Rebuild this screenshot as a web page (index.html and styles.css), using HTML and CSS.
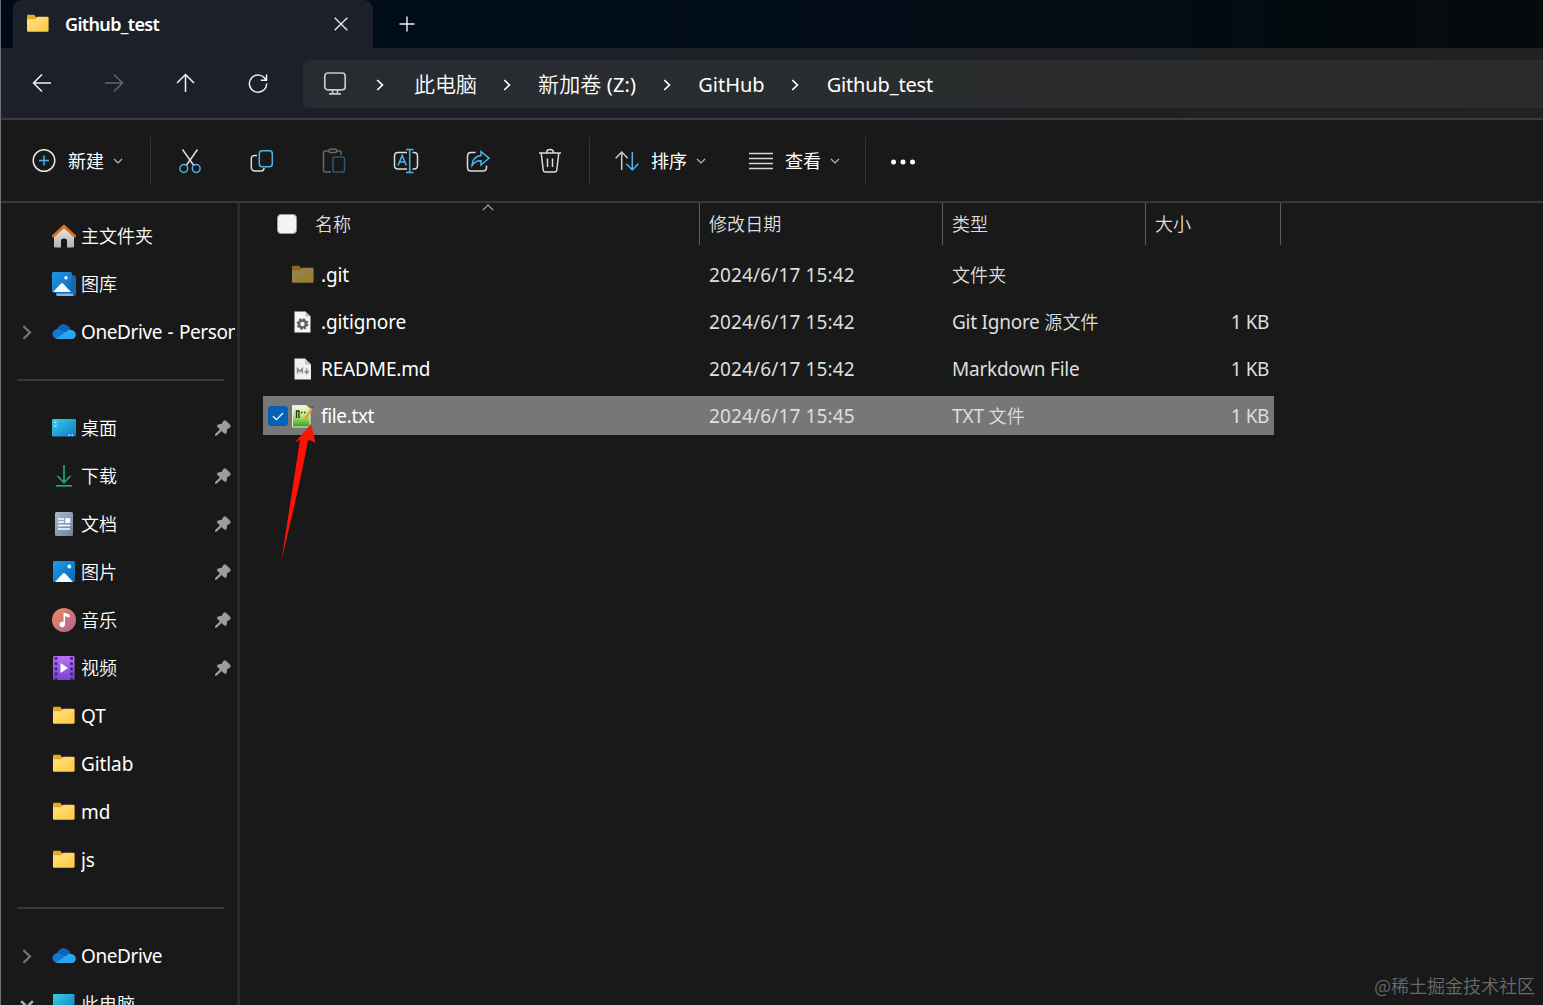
FILE: index.html
```html
<!DOCTYPE html>
<html lang="zh-CN">
<head>
  <meta charset="UTF-8" />
  <title>Github_test</title>
  <link rel="stylesheet" href="styles.css">
</head>
<body>

  <!-- shared icons -->
  <svg class="defs" width="0" height="0">
    <defs>
      <linearGradient id="gFolder" x1="0" y1="0" x2="1" y2="1"><stop offset="0" stop-color="#ffe08a"/><stop offset="1" stop-color="#ffc83d"/></linearGradient>
      <linearGradient id="gBlue" x1="0" y1="0" x2="1" y2="1"><stop offset="0" stop-color="#1f9be6"/><stop offset="1" stop-color="#0a66b8"/></linearGradient>
      <linearGradient id="gDesk" x1="0" y1="0" x2="1" y2="1"><stop offset="0" stop-color="#35d0e2"/><stop offset="1" stop-color="#0f78c8"/></linearGradient>
      <linearGradient id="gHouse" x1="0" y1="0" x2="0" y2="1"><stop offset="0" stop-color="#e8e8e8"/><stop offset="1" stop-color="#b4b4b4"/></linearGradient>
      <linearGradient id="gDoc" x1="0" y1="0" x2="1" y2="1"><stop offset="0" stop-color="#a9b8ca"/><stop offset="1" stop-color="#6f84a2"/></linearGradient>
      <linearGradient id="gMusic" x1="0" y1="0" x2="1" y2="1"><stop offset="0" stop-color="#f08a55"/><stop offset="1" stop-color="#b0609c"/></linearGradient>
      <linearGradient id="gVideo" x1="0" y1="0" x2="0" y2="1"><stop offset="0" stop-color="#b673f2"/><stop offset="1" stop-color="#8040d8"/></linearGradient>
      <linearGradient id="gNote" x1="0" y1="0" x2="0" y2="1"><stop offset="0" stop-color="#f2f7e8"/><stop offset=".45" stop-color="#c8e87c"/><stop offset="1" stop-color="#2e9e1c"/></linearGradient>
    </defs>
    <symbol id="folder" viewBox="0 0 24 24">
      <path d="M1 4Q1 2.800 2.200 2.800H8L10 4.800V9H1z" fill="#e8a91c"/>
      <path d="M1 7.200H9L11 4.800H21.600Q22.600 4.800 22.600 6V18.600Q22.600 19.800 21.600 19.800H2.200Q1 19.800 1 18.600z" fill="url(#gFolder)"/>
    </symbol>
    <symbol id="cloud" viewBox="0 0 24 24">
      <path d="M4.500 11C6 2.500 15.500 2 18.500 9.500L12 14z" fill="#0a64b8"/>
      <path d="M5.500 19C-1.500 18.500-1 9 6 9Q9 9 18 14.500L10 19z" fill="#1179d0"/>
      <path d="M3.800 18.600L15 11Q17 9 19.500 10C25.500 11 25 19 19.500 19H6Q4.500 19 3.800 18.600z" fill="#2ba4ee"/>
    </symbol>
    <symbol id="pin" viewBox="0 0 16 16">
      <path d="M8.800 1.400Q9.800.4 10.800 1.400L14.600 5.200Q15.600 6.200 14.500 7L11.800 8.800 11 12.600Q10.300 13.800 9.400 12.900L6.500 10.100 1.600 15 .600 15.200.8 14.200 5.700 9.300 2.900 6.500Q2.200 5.500 3.400 5L7.200 4.300z" fill="#9b9fa1" stroke="#9b9fa1" stroke-width="1.200"/>
    </symbol>
    <symbol id="down" viewBox="0 0 10 6"><path d="M1 1L5 5L9 1" fill="none" stroke="#b8b8b8" stroke-width="1.200"/></symbol>
    <symbol id="right" viewBox="0 0 8 12"><path d="M1.200 1L6.400 6L1.200 11" fill="none" stroke="currentColor" stroke-width="1.700"/></symbol>
    <symbol id="picture" viewBox="0 0 22 22">
      <rect x="0" y="0" width="22" height="21" rx="1.500" fill="url(#gBlue)"/>
      <path d="M2 21L9.800 12.600Q11 11.400 12.200 12.600L20 21z" fill="#f4f8fc"/>
      <circle cx="16.300" cy="5.500" r="1.900" fill="#fff"/>
    </symbol>
  </svg>

  <div class="window">
    <header class="titlebar">
      <div class="tab">
        <svg class="icon" viewBox="0 0 24 24"><use href="#folder"/></svg>
        <span class="tab-title">Github_test</span>
        <svg class="tab-close" viewBox="0 0 14 14"><path d="M.7.7L13.300 13.300M13.300.7L.7 13.300" fill="none" stroke="#eee" stroke-width="1.300"/></svg>
      </div>
      <svg class="tab-new" viewBox="0 0 16 16"><path d="M8 .5V15.500M.5 8H15.500" stroke="#eee" stroke-width="1.400"/></svg>
    </header>

    <nav class="navbar">
      <div class="nav-btn"><svg viewBox="0 0 24 24"><path d="M21 12H3.500M12 3.500L3.500 12L12 20.500"/></svg></div>
      <div class="nav-btn disabled"><svg viewBox="0 0 24 24"><path d="M3 12H20.500M12 3.500L20.500 12L12 20.500"/></svg></div>
      <div class="nav-btn"><svg viewBox="0 0 24 24"><path d="M11.500 21V3.500M3 12L11.500 3.500L20 12"/></svg></div>
      <div class="nav-btn"><svg viewBox="0 0 24 24"><path d="M19.800 9A8.600 8.600 0 1 0 20.600 12.500M20.500 3.500V9.200H14.800"/></svg></div>
      <div class="address">
        <svg class="monitor" viewBox="0 0 24 24"><rect x="1.800" y="1" width="20.400" height="16.800" rx="3"/><path d="M9.500 18V21M14.500 18V21M6 21.800H18"/></svg>
        <svg class="sep"><use href="#right"/></svg>
        <span class="zh crumb-pc">此电脑</span>
        <svg class="sep"><use href="#right"/></svg>
        <span class="crumb-vol"><span class="zh">新加卷</span> (Z:)</span>
        <svg class="sep"><use href="#right"/></svg>
        <span class="crumb-hub">GitHub</span>
        <svg class="sep"><use href="#right"/></svg>
        <span class="crumb-test">Github_test</span>
      </div>
    </nav>

    <div class="toolbar">
      <div class="menu">
        <svg class="icon" viewBox="0 0 24 24"><circle cx="12" cy="11.500" r="10.800" fill="none" stroke="#e2e2e2" stroke-width="1.500"/><path d="M12 6.500V16.500M7 11.500H17" stroke="#4cb4f0" stroke-width="1.500"/></svg>
        <span class="zh">新建</span>
        <svg class="caret"><use href="#down"/></svg>
      </div>
      <i class="split"></i>
      <div class="tools">
        <div class="tool"><svg viewBox="0 0 24 26"><path d="M4.500 1.500L15.800 17.500M19.500 1.500L8.200 17.500"/><g class="accent"><circle cx="5.800" cy="20.500" r="3.900"/><circle cx="18.200" cy="20.500" r="3.900"/></g></svg></div>
        <div class="tool"><svg viewBox="0 0 24 26"><path d="M7 7.500H4.500Q1.300 7.500 1.300 10.500V19Q1.300 23 5.300 23H11Q14 23 14 20"/><rect class="accent" x="9.300" y="2.700" width="13" height="16" rx="3"/></svg></div>
        <div class="tool faded"><svg viewBox="0 0 24 26"><path d="M7 3H3Q1.500 3 1.500 4.500V22.500Q1.500 24 3 24H9M14.500 3H17.500Q19 3 19 4.500V7"/><rect x="6.800" y="1.300" width="8" height="3.200" rx="1.500"/><rect class="accent" x="11" y="9" width="11.500" height="15" rx="1.500"/></svg></div>
        <div class="tool"><svg class="wide" viewBox="0 0 26 26"><path d="M14 4.500H5Q1.500 4.500 1.500 8V17.500Q1.500 21 5 21H14M19.500 4.500H21Q24.500 4.500 24.500 8V17.500Q24.500 21 21 21H19.500"/><path class="accent" d="M16.700 1.500V24.500M13 1.500H20.500M13 24.500H20.500M5 17.500L9.200 7.500L13.400 17.500M6.500 14H12"/></svg></div>
        <div class="tool"><svg viewBox="0 0 24 26"><path d="M9.500 4.500H5Q1.500 4.500 1.500 8V19.500Q1.500 23 5 23H17Q20.500 23 20.500 19.500V17.500"/><path class="accent" d="M15 3.500L23 10.200L15 17V12.800Q9.500 12.500 6 17.500Q6.500 8.500 15 7.500z"/></svg></div>
        <div class="tool"><svg viewBox="0 0 24 26"><path d="M1 5H23M8.500 5Q8.500 1.500 12 1.500T15.500 5M3.200 5L5.200 22Q5.500 24 7.500 24H16.500Q18.500 24 18.800 22L20.800 5M9.500 10.500V19M14.500 10.500V19"/></svg></div>
      </div>
      <i class="split mid"></i>
      <div class="menu">
        <svg class="icon" viewBox="0 0 24 24"><path d="M6.700 21V3M.7 9.200L6.700 3L12.700 9.200" fill="none" stroke="#ccc" stroke-width="1.500"/><path d="M17.300 3V21M11.300 14.800L17.300 21L23.300 14.800" fill="none" stroke="#4cb4f0" stroke-width="1.500"/></svg>
        <span class="zh">排序</span>
        <svg class="caret"><use href="#down"/></svg>
      </div>
      <div class="menu view">
        <svg class="icon" viewBox="0 0 24 24"><path d="M0 4.500H24M0 9.500H24M0 14.500H24M0 19.500H24" stroke="#d8d8d8" stroke-width="1.400"/></svg>
        <span class="zh">查看</span>
        <svg class="caret"><use href="#down"/></svg>
      </div>
      <i class="split end"></i>
      <svg class="dots" viewBox="0 0 24 6"><circle cx="2.500" cy="3" r="2.500"/><circle cx="12" cy="3" r="2.500"/><circle cx="21.500" cy="3" r="2.500"/></svg>
    </div>

    <div class="content">
      <aside class="sidebar">
        <div class="item">
          <svg class="icon" viewBox="0 0 24 24"><path d="M2 11L12 3L22 11V22Q22 23.500 20.500 23.500H15V16.500Q15 14.500 12 14.500T9 16.500V23.500H3.500Q2 23.500 2 22z" fill="url(#gHouse)"/><path d="M1.500 12L12 2.300L22.500 12" fill="none" stroke="#d9732a" stroke-width="3" stroke-linecap="round" stroke-linejoin="round"/></svg>
          <span class="zh">主文件夹</span>
        </div>
        <div class="item">
          <svg class="icon" viewBox="0 0 24 24"><path d="M21 3Q24 3 24 5.500V22Q24 24 22 24H6Q4 24 4 21z" fill="#1767b2"/><path d="M4 21.500H21V24H6Q4 24 4 21.500z" fill="#82b5e8"/><rect width="20" height="20.500" rx="1.500" fill="url(#gBlue)"/><path d="M1 20L9 11.500Q10 10.700 11 11.500L19 20z" fill="#f2f7fc"/><circle cx="14" cy="5.800" r="1.700" fill="#fff"/></svg>
          <span class="zh">图库</span>
        </div>
        <div class="item">
          <svg class="expand"><use href="#right"/></svg>
          <svg class="icon" viewBox="0 0 24 24"><use href="#cloud"/></svg>
          <span class="label drive">OneDrive - Personal</span>
        </div>
        <hr>
        <div class="item">
          <svg class="icon" viewBox="0 0 24 24"><rect y="3" width="24" height="17.500" rx="1.200" fill="url(#gDesk)"/><path d="M2.500 5.500H4.500V7H2.500zM2.500 9.200H4.500V10.700H2.500zM16.500 18.500H18V20H16.500zM19.500 18.500H21V20H19.500z" fill="#c8f2ff"/></svg>
          <span class="zh">桌面</span>
          <svg class="pin"><use href="#pin"/></svg>
        </div>
        <div class="item">
          <svg class="icon" viewBox="0 0 24 24"><path d="M12 1V18M5.500 12L12 18.500L18.500 12M4 21.800H20" fill="none" stroke="#27a37e" stroke-width="1.700"/></svg>
          <span class="zh">下载</span>
          <svg class="pin"><use href="#pin"/></svg>
        </div>
        <div class="item">
          <svg class="icon" viewBox="0 0 24 24"><rect x="3" width="18" height="24" rx="1.500" fill="url(#gDoc)"/><path d="M6 7H12M6 10H12M6 13.500H18M6 17H18" stroke="#fff" stroke-width="1.400"/><rect x="13.300" y="6.200" width="5" height="4.800" fill="#fff"/></svg>
          <span class="zh">文档</span>
          <svg class="pin"><use href="#pin"/></svg>
        </div>
        <div class="item">
          <svg class="icon" viewBox="-1 -1 24 24"><use href="#picture" width="22" height="22"/></svg>
          <span class="zh">图片</span>
          <svg class="pin"><use href="#pin"/></svg>
        </div>
        <div class="item">
          <svg class="icon" viewBox="0 0 24 24"><circle cx="12" cy="12" r="12" fill="url(#gMusic)"/><circle cx="10.200" cy="16.500" r="2.700" fill="#fff"/><path d="M11.500 16.500V4.500L17.500 6.500V9.500L13 8.300V16.500z" fill="#fff"/></svg>
          <span class="zh">音乐</span>
          <svg class="pin"><use href="#pin"/></svg>
        </div>
        <div class="item">
          <svg class="icon" viewBox="0 0 24 24"><rect x="1" width="21.500" height="24" rx="1.500" fill="url(#gVideo)"/><path d="M4 1V24M19.500 1V24" stroke="#4a2090" stroke-width="2.800" stroke-dasharray="2.800 2.400"/><path d="M8.500 7L16 12L8.500 17z" fill="#fff"/></svg>
          <span class="zh">视频</span>
          <svg class="pin"><use href="#pin"/></svg>
        </div>
        <div class="item"><svg class="icon" viewBox="0 0 24 24"><use href="#folder"/></svg><span class="label">QT</span></div>
        <div class="item"><svg class="icon" viewBox="0 0 24 24"><use href="#folder"/></svg><span class="label">Gitlab</span></div>
        <div class="item"><svg class="icon" viewBox="0 0 24 24"><use href="#folder"/></svg><span class="label">md</span></div>
        <div class="item"><svg class="icon" viewBox="0 0 24 24"><use href="#folder"/></svg><span class="label">js</span></div>
        <hr>
        <div class="item">
          <svg class="expand"><use href="#right"/></svg>
          <svg class="icon" viewBox="0 0 24 24"><use href="#cloud"/></svg>
          <span class="label drive">OneDrive</span>
        </div>
        <div class="item">
          <svg class="expand open" viewBox="0 0 14 9"><path d="M1.200 1.200L7 7L12.800 1.200" fill="none" stroke="#b5b5b5" stroke-width="2.400"/></svg>
          <svg class="icon" viewBox="0 0 24 24"><rect x="1" y="2" width="21.500" height="18" rx="1" fill="url(#gDesk)"/></svg>
          <span class="zh">此电脑</span>
        </div>
      </aside>

      <main class="files">
        <div class="row head">
          <div class="cell name"><span class="checkbox"></span><span class="zh">名称</span>
            <svg class="sort-mark" viewBox="0 0 12 7"><path d="M.8 6.200L6 1L11.200 6.200" fill="none" stroke="#aaa" stroke-width="1.200"/></svg>
          </div>
          <div class="cell"><span class="zh">修改日期</span></div>
          <div class="cell"><span class="zh">类型</span></div>
          <div class="cell"><span class="zh">大小</span></div>
        </div>
        <div class="row">
          <div class="cell name"><svg class="icon dim" viewBox="0 0 24 24"><use href="#folder"/></svg><span>.git</span></div>
          <div class="cell date">2024/6/17 15:42</div>
          <div class="cell"><span class="zh">文件夹</span></div>
          <div class="cell size"></div>
        </div>
        <div class="row">
          <div class="cell name">
            <svg class="icon" viewBox="0 0 24 24"><path d="M3.500 1.500H14.500L19.500 6.500V22.500H3.500z" fill="#f6f6f6"/><path d="M14.500 1.500V6.500H19.500z" fill="#b9b9b9"/><circle cx="11.500" cy="14" r="3.500" fill="none" stroke="#59636a" stroke-width="2.600"/><circle cx="11.500" cy="14" r="5" fill="none" stroke="#59636a" stroke-width="1.800" stroke-dasharray="2 1.930"/></svg>
            <span>.gitignore</span>
          </div>
          <div class="cell date">2024/6/17 15:42</div>
          <div class="cell type">Git Ignore <span class="zh">源文件</span></div>
          <div class="cell size">1 KB</div>
        </div>
        <div class="row">
          <div class="cell name">
            <svg class="icon" viewBox="0 0 24 24"><path d="M3.500 1.500H14L20 7.500V22.500H3.500z" fill="#efefef"/><path d="M14 1.500V7.500H20z" fill="#c4c4c4"/><path d="M6.500 16.500V11.800L8.900 14.500L11.300 11.800V16.500M15.700 11.500V16M13.700 14.200L15.700 16.400L17.700 14.200" fill="none" stroke="#8a8a8a" stroke-width="1.500"/></svg>
            <span>README.md</span>
          </div>
          <div class="cell date">2024/6/17 15:42</div>
          <div class="cell type">Markdown File</div>
          <div class="cell size">1 KB</div>
        </div>
        <div class="row selected">
          <div class="cell name">
            <svg class="check" viewBox="0 0 20 20"><rect width="20" height="20" rx="3.500" fill="#0560b8"/><path d="M5 10.300L8.500 13.700L15 7" fill="none" stroke="#fff" stroke-width="1.300"/></svg>
            <svg class="icon" viewBox="0 0 24 24"><path d="M1.500 1.500H15L19 5V23H1.500z" fill="url(#gNote)" stroke="#e8efe0" stroke-width="1"/><path d="M5.500 14V7H8V14M10 8.500H11.500M13 8.500H14.500" fill="none" stroke="#26331d" stroke-width="1.400"/><path d="M13 16.500L14 13L20 3.500L22 4.800L16 14.300z" fill="#e3a32c"/><path d="M20 3.500L21 1.800L23 3L22 4.800z" fill="#555"/></svg>
            <span class="tight">file.txt</span>
          </div>
          <div class="cell date">2024/6/17 15:45</div>
          <div class="cell">TXT <span class="zh">文件</span></div>
          <div class="cell size">1 KB</div>
        </div>
      </main>
    </div>
  </div>

  <svg class="arrow" viewBox="0 0 40 136"><path d="M1.500 136L20 15.800L14.500 19L31 0L35.500 18.500L29.500 16L28 16.500Q20 60 1.500 136z" fill="#ff1206"/></svg>
  <div class="watermark">@稀土掘金技术社区</div>

</body>
</html>
```
FILE: styles.css
```css
* {
  margin: 0; padding: 0; box-sizing: border-box;
}
body {
  width: 1543px;
  height: 1005px;
  overflow: hidden;
  position: relative;
  background: #191919;
  color: #fff;
  font-family: "Noto Sans", "Noto Sans CJK SC", sans-serif;
  font-size: 19px;
  line-height: 24px;
}
svg {
  display: block;
  flex: none;
}
.defs {
  position: absolute;
}
.zh {
  font-family: "Noto Sans CJK SC", sans-serif;
  font-size: 18px;
  font-weight: 350;
  padding-bottom: 2px;
}
.icon {
  width: 24px;
  height: 24px;
}
.window {
  height: 1005px;
  border-left: 1px solid #6d6f71;
  display: flex;
  flex-direction: column;
}

/* title bar */
.titlebar {
  height: 48px;
  flex: none;
  display: flex;
  align-items: center;
  background: linear-gradient(90deg, #000b18, #010d18 50%, #050a0c);
  padding-left: 12px;
}
.tab {
  width: 360px;
  height: 48px;
  display: flex;
  align-items: center;
  padding: 0 25px 0 13px;
  background: #1c2029;
  border-radius: 9px 9px 0 0;
}
.tab-title {
  flex: 1;
  margin-left: 15px;
  font-size: 18px;
  font-weight: 600;
  letter-spacing: -0.65px;
}
.tab-close {
  width: 14px;
  height: 14px;
}
.tab-new {
  width: 16px;
  height: 16px;
  margin-left: 26px;
}

/* navigation */
.navbar {
  height: 72px;
  flex: none;
  display: flex;
  align-items: center;
  background: linear-gradient(90deg, #1c2029 35%, #1f2123 80%);
  border-bottom: 2px solid #3a3b3e;
  padding-left: 5px;
}
.nav-btn {
  width: 72px;
  display: flex;
  justify-content: center;
}
.nav-btn svg {
  width: 24px;
  height: 24px;
  fill: none;
  stroke: #f2f2f2;
  stroke-width: 1.5;
}
.nav-btn.disabled svg {
  stroke: #62666c;
}
.address {
  flex: 1;
  height: 48px;
  margin-left: 9px;
  margin-top: 2px;
  padding-left: 20px;
  display: flex;
  align-items: center;
  background: linear-gradient(90deg, #272c32, #2a2d2e 50%, #2b2b2b);
  border-radius: 6px 0 0 6px;
  font-size: 20px;
}
.address .zh {
  font-size: 21px;
}
.crumb-pc {
  margin-right: 0;
}
.crumb-vol {
  padding-bottom: 1px;
  margin-right: 1px;
  letter-spacing: 0.15px;
}
.crumb-hub {
  padding-top: 1px;
}
.crumb-test {
  padding-top: 1px;
  margin-left: 1px;
  letter-spacing: -0.15px;
}
.monitor {
  width: 24px;
  height: 24px;
  fill: none;
  stroke: #c5c9cc;
  stroke-width: 1.7;
}
.sep {
  width: 8px;
  height: 12px;
  margin: 2px 27px 0 26px;
}
.monitor + .sep {
  margin-left: 29px;
  margin-right: 30px;
}

/* command bar */
.toolbar {
  height: 83px;
  flex: none;
  display: flex;
  align-items: center;
  border-bottom: 2px solid #383838;
  padding-left: 31px;
}
.menu {
  display: flex;
  align-items: center;
}
.menu .zh {
  width: 37px;
  margin: 0 8px 0 12px;
  font-weight: 400;
}
.menu.view {
  margin-left: 43px;
}
.caret {
  width: 10px;
  height: 6px;
}
.split {
  width: 1px;
  height: 48px;
  margin: 0 3px 0 27px;
  background: #343434;
}
.split.mid {
  margin: 0 25px 0 3px;
}
.split.end {
  margin: 0 25px 0 25px;
}
.tools {
  display: flex;
}
.tool {
  width: 72px;
  display: flex;
  justify-content: center;
}
.tool svg {
  width: 24px;
  height: 26px;
  fill: none;
  stroke: #dcdcdc;
  stroke-width: 1.5;
}
.tool svg.wide {
  width: 26px;
}
.tool .accent {
  stroke: #4cb4f0;
}
.tool.faded svg {
  opacity: .4;
}
.dots {
  width: 24px;
  height: 6px;
  margin-top: 2px;
  fill: #fff;
}

/* sidebar */
.content {
  flex: 1;
  min-height: 0;
  display: flex;
}
.sidebar {
  width: 239px;
  flex: none;
  overflow: hidden;
  border-right: 3px solid #2a2a2a;
  padding-top: 9px;
}
.item {
  height: 48px;
  display: flex;
  align-items: center;
  padding-left: 51px;
  position: relative;
}
.item .zh,
.item .label {
  flex: 1;
  margin-left: 5px;
  white-space: nowrap;
  overflow: hidden;
}
.item .label {
  margin-right: 2px;
  letter-spacing: -0.1px;
}
.item .label.drive {
  letter-spacing: -0.4px;
  word-spacing: 1px;
}
.expand {
  position: absolute;
  left: 21px;
  top: 17px;
  width: 10px;
  height: 15px;
  color: #777;
}
.expand.open {
  left: 19px;
  width: 14px;
  height: 9px;
  top: 20px;
}
.pin {
  width: 16px;
  height: 16px;
  margin-right: 6px;
}
hr {
  height: 2px;
  margin: 23px 13px 23px 16px;
  border: none;
  background: #383838;
}

/* file list */
.files {
  padding-left: 23px;
}
.row {
  width: 1011px;
  height: 39px;
  margin-bottom: 8px;
  display: grid;
  grid-template-columns: 436px 243px 203px 129px;
}
.cell {
  display: flex;
  align-items: center;
  padding-left: 10px;
  white-space: pre;
  color: #dedede;
  letter-spacing: -0.15px;
}
.cell .zh {
  letter-spacing: 0.1px;
}
.cell.name {
  position: relative;
  padding-left: 28px;
  color: #fff;
}
.cell.name .icon + span {
  margin-left: 6px;
}
.cell .tight {
  letter-spacing: -0.35px;
}
.cell.date {
  letter-spacing: 0.14px;
}
.cell.type {
  letter-spacing: -0.25px;
}
.cell.size {
  justify-content: flex-end;
  padding: 0 5px 0 0;
  letter-spacing: -0.4px;
}
.dim {
  opacity: .55;
}
.head {
  width: 1018px;
  height: 42px;
  margin-bottom: 10px;
  grid-template-columns: 437px 243px 203px 135px;
}
.head .cell {
  padding-left: 9px;
  border-right: 1px solid #5c5c5c;
}
.head .cell.name {
  padding-left: 14px;
  color: #dedede;
}
.checkbox {
  width: 20px;
  height: 20px;
  margin-right: 18px;
  background: #f3f3f3;
  border: 1px solid #999;
  border-radius: 4px;
}
.sort-mark {
  position: absolute;
  left: 219px;
  top: 1px;
  width: 12px;
  height: 7px;
}
.selected {
  background: #777;
}
.check {
  position: absolute;
  left: 5px;
  width: 20px;
  height: 20px;
}

/* overlays */
.arrow {
  position: absolute;
  left: 280px;
  top: 424px;
  width: 40px;
  height: 136px;
}
.watermark {
  position: absolute;
  right: 8px;
  bottom: 8px;
  font-family: "Noto Sans CJK SC", sans-serif;
  font-size: 18px;
  font-weight: 350;
  color: #6a6a6a;
}
```
